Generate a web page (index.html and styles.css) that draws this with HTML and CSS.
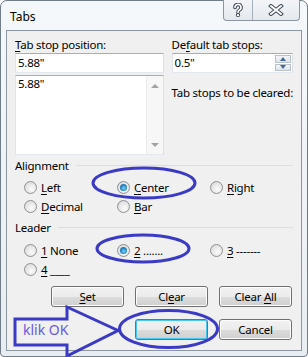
FILE: index.html
```html
<!DOCTYPE html>
<html lang="en">
  <head>
    <meta charset="UTF-8" />
    <title>Tabs</title>
    <link rel="stylesheet" href="styles.css">
  </head>
  <body>
    <div class="window">
      <div class="titlebar">
        <span class="title">Tabs</span>
        <div class="caption-btns">
          <span class="cbtn help">
            <svg width="12" height="14" viewBox="0 0 12 14">
              <path d="M3 4.5 A3 3 0 1 1 7.5 7 Q6 7.8 6 9.5" fill="none" stroke="#3c4450" stroke-width="3.6" stroke-linecap="round"/>
              <path d="M3 4.5 A3 3 0 1 1 7.5 7 Q6 7.8 6 9.5" fill="none" stroke="#fff" stroke-width="1.6" stroke-linecap="round"/>
              <circle cx="6" cy="12.2" r="1.7" fill="#fff" stroke="#3c4450" stroke-width="1"/>
            </svg>
          </span>
          <span class="cbtn close">
            <svg width="16" height="12" viewBox="0 0 16 12">
              <path d="M3 2 L13 10 M13 2 L3 10" stroke="#4a525c" stroke-width="4" stroke-linecap="square"/>
              <path d="M3 2 L13 10 M13 2 L3 10" stroke="#fff" stroke-width="1.8" stroke-linecap="square"/>
            </svg>
          </span>
        </div>
      </div>
      <div class="client">
        <div class="top">
          <div class="col-left">
            <div class="lbl"><u>T</u>ab stop position:</div>
            <div class="textbox">5.88"</div>
            <div class="listbox">
              <div class="items">5.88"</div>
              <div class="vscroll">
                <span class="arrow-up"></span>
                <span class="arrow-down"></span>
              </div>
            </div>
          </div>
          <div class="col-right">
            <div class="lbl">De<u>f</u>ault tab stops:</div>
            <div class="textbox spin">
              <span>0.5"</span>
              <div class="spin-btns">
                <span class="spin-up"><i></i></span>
                <span class="spin-down"><i></i></span>
              </div>
            </div>
            <div class="clear-label">Tab stops to be cleared:</div>
          </div>
        </div>

        <div class="group-head"><span>Alignment</span><i class="rule"></i></div>
        <div class="radios">
          <label class="radio"><span class="dot"></span><span><u>L</u>eft</span></label>
          <label class="radio"><span class="dot on"></span><span><u>C</u>enter</span></label>
          <label class="radio"><span class="dot"></span><span><u>R</u>ight</span></label>
          <label class="radio"><span class="dot"></span><span><u>D</u>ecimal</span></label>
          <label class="radio"><span class="dot"></span><span><u>B</u>ar</span></label>
        </div>

        <div class="group-head leader"><span>Leader</span><i class="rule"></i></div>
        <div class="radios leaders">
          <label class="radio"><span class="dot"></span><span><u>1</u> None</span></label>
          <label class="radio"><span class="dot on"></span><span><u>2</u> .......</span></label>
          <label class="radio"><span class="dot"></span><span><u>3</u> -------</span></label>
          <label class="radio"><span class="dot"></span><span><u>4</u> ____</span></label>
        </div>

        <div class="btns">
          <span class="btn"><span><u>S</u>et</span></span>
          <span class="btn"><span>Cl<u>e</u>ar</span></span>
          <span class="btn"><span>Clear <u>A</u>ll</span></span>
        </div>
        <div class="btns last">
          <span class="btn default">OK</span>
          <span class="btn">Cancel</span>
        </div>
      </div>
    </div>

    <svg class="marks" width="308" height="357" viewBox="0 0 308 357">
      <g fill="none" stroke="#3a3ac6" stroke-width="3">
        <ellipse cx="144" cy="183" rx="51" ry="15"/>
        <ellipse cx="143" cy="248.5" rx="46" ry="13.5"/>
        <ellipse cx="168.5" cy="329" rx="49" ry="18.5"/>
        <path d="M15 319 H67 V307 L118 330.5 L67 356 V345 H15 Z"/>
      </g>
      <text class="klik" x="23" y="335">klik OK</text>
    </svg>
  </body>
</html>
```

FILE: styles.css
```css
body {
  margin: 0;
  position: relative;
  width: 308px;
  height: 357px;
  overflow: hidden;
  background: #fff;
  font-family: "Noto Sans", sans-serif;
  font-size: 11.5px;
  letter-spacing: -0.25px;
  color: #000;
}

u {
  text-decoration-thickness: 1px;
  text-underline-offset: 2px;
}

.window {
  box-sizing: border-box;
  width: 308px;
  height: 357px;
  border: 1px solid #707c88;
  border-radius: 7px 7px 4px 4px;
  background: linear-gradient(#f5f8fb, #e8edf2);
  padding: 0 5px 5px;
  display: flex;
  flex-direction: column;
}

.titlebar {
  height: 29px;
  display: flex;
  align-items: center;
}

.title {
  margin-left: 4px;
  margin-top: 1px;
  font-size: 12px;
  letter-spacing: 0;
}

.caption-btns {
  margin-left: auto;
  margin-right: 2px;
  margin-top: -1px;
  align-self: flex-start;
  display: flex;
  height: 21px;
  border: 1px solid #8b96a2;
  border-top: none;
  border-radius: 0 0 4px 4px;
  background: linear-gradient(#f3f5f8, #e4e9ef);
  box-sizing: border-box;
}

.cbtn {
  display: flex;
  align-items: center;
  justify-content: center;
}

.help {
  width: 28px;
  border-right: 1px solid #a6b0bb;
}

.close {
  width: 46px;
}

.client {
  flex: 1;
  border: 1px solid #8d97a2;
  background: #f0f0f0;
  padding: 6px 8px 0;
  display: flex;
  flex-direction: column;
}

.top {
  display: flex;
  gap: 8px;
}

.col-left {
  width: 152px;
  display: flex;
  flex-direction: column;
}

.col-right {
  flex: 1;
  display: flex;
  flex-direction: column;
}

.lbl {
  height: 15px;
  line-height: 15px;
  margin-bottom: 1px;
}

.textbox {
  box-sizing: border-box;
  height: 20px;
  border: 1px solid;
  border-color: #abadb3 #dbdfe6 #e3e9ef #e2e3ea;
  background: #fff;
  padding: 0 2px;
  line-height: 18px;
}

.listbox {
  margin-top: 2px;
  height: 80px;
  box-sizing: border-box;
  border: 1px solid;
  border-color: #abadb3 #dbdfe6 #e3e9ef #e2e3ea;
  background: #fff;
  display: flex;
}

.items {
  flex: 1;
  padding: 0 2px;
  line-height: 15px;
}

.vscroll {
  width: 16px;
  background: #f7f7f7;
  border-left: 1px solid #ebebeb;
  display: flex;
  flex-direction: column;
  justify-content: space-between;
  align-items: center;
  padding: 8px 0 7px;
}

.arrow-up,
.arrow-down {
  width: 0;
  height: 0;
  border-left: 4px solid transparent;
  border-right: 4px solid transparent;
}

.arrow-up {
  border-bottom: 4px solid #a3a3a3;
}

.arrow-down {
  border-top: 4px solid #a3a3a3;
}

.spin {
  display: flex;
  justify-content: space-between;
  padding-right: 1px;
}

.spin-btns {
  width: 16px;
  display: flex;
  flex-direction: column;
  gap: 1px;
  padding: 1px 0;
}

.spin-btns span {
  flex: 1;
  border: 1px solid #b9c1ca;
  background: linear-gradient(#f3f5f8, #dde3ea);
  display: flex;
  align-items: center;
  justify-content: center;
}

.spin-btns i {
  width: 0;
  height: 0;
  border-left: 3.5px solid transparent;
  border-right: 3.5px solid transparent;
}

.spin-up i {
  border-bottom: 4px solid #4a6a96;
}

.spin-down i {
  border-top: 4px solid #4a6a96;
}

.clear-label {
  margin-top: 12px;
  line-height: 15px;
  white-space: nowrap;
}

.group-head {
  height: 15px;
  margin-top: 3px;
  display: flex;
  align-items: center;
  gap: 7px;
}

.group-head.leader {
  margin-top: 4px;
}

.rule {
  flex: 1;
  height: 1px;
  background: #d5dfe5;
}

.radios {
  margin-top: 5px;
  padding-left: 9px;
  display: grid;
  grid-template-columns: 93px 93px 1fr;
  grid-auto-rows: 19px;
}

.radios.leaders {
  margin-top: 6px;
}

.radio {
  display: flex;
  align-items: center;
  gap: 4px;
}

.dot {
  box-sizing: border-box;
  width: 13px;
  height: 13px;
  border-radius: 50%;
  border: 1px solid #8f9091;
  background: radial-gradient(circle at 60% 65%, #fbfbfb 0, #e4e4e4 60%, #cfcfcf 100%);
  display: flex;
  align-items: center;
  justify-content: center;
}

.dot.on::after {
  content: "";
  width: 7px;
  height: 7px;
  border-radius: 50%;
  background: radial-gradient(circle at 55% 60%, #7fd6fa 0, #2b8fd0 45%, #0a4d86 100%);
}

.btns {
  margin-top: 7px;
  margin-right: 1px;
  display: flex;
  justify-content: flex-end;
  gap: 11px;
}

.btns.last {
  margin-top: 12px;
}

.btn {
  box-sizing: border-box;
  width: 73px;
  height: 21px;
  border: 1px solid #707070;
  border-radius: 3px;
  background: linear-gradient(#f2f2f2 0, #ebebeb 50%, #dddddd 50%, #cfcfcf 100%);
  box-shadow: inset 0 0 0 1px #fcfcfc;
  display: flex;
  align-items: center;
  justify-content: center;
}

.btn.default {
  border-color: #3c7fb1;
  box-shadow: inset 0 0 0 1px #48c8f0;
}

.marks {
  position: absolute;
  top: 0;
  left: 0;
  pointer-events: none;
}

.klik {
  font-family: "Noto Sans", sans-serif;
  font-size: 14px;
  letter-spacing: 0;
  fill: #6a5ad8;
}
```
